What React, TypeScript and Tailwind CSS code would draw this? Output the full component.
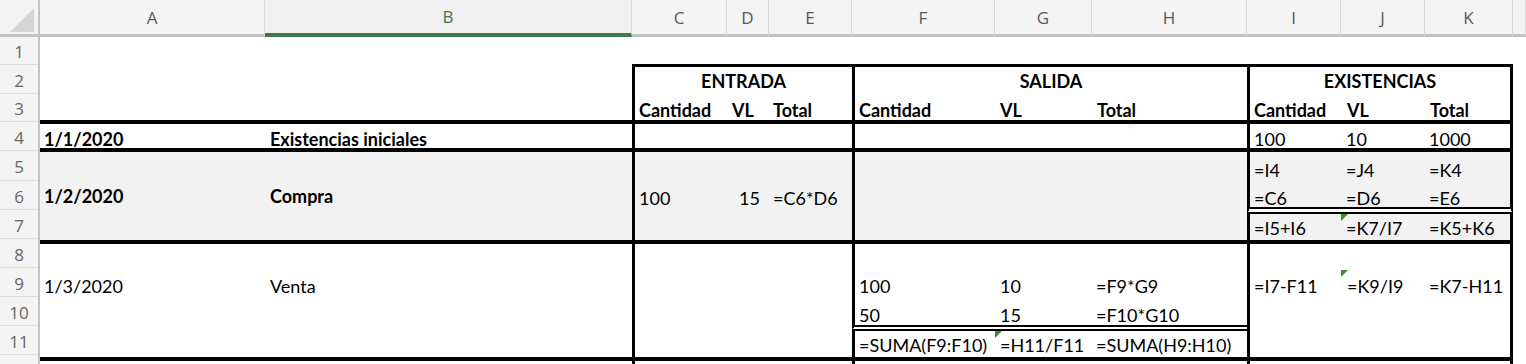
import React from "react";

type CellProps = { className?: string; children?: React.ReactNode; flag?: boolean };

function Cell({ className = "", children, flag }: CellProps) {
  return (
    <div className={"relative flex whitespace-nowrap leading-[18px] border-black " + className}>
      {flag && (
        <span className="absolute left-0 top-0 h-0 w-0 border-t-[7px] border-r-[7px] border-t-[#3f8d2b] border-r-transparent" />
      )}
      {children}
    </div>
  );
}

const headers = ["A", "B", "C", "D", "E", "F", "G", "H", "I", "J", "K", ""];
const rowNums = [
  { n: "1", h: "h-[28px]" },
  { n: "2", h: "h-[29px]" },
  { n: "3", h: "h-[28px]" },
  { n: "4", h: "h-[29px]" },
  { n: "5", h: "h-[30px]" },
  { n: "6", h: "h-[29px]" },
  { n: "7", h: "h-[29px]" },
  { n: "8", h: "h-[29px]" },
  { n: "9", h: "h-[29px]" },
  { n: "10", h: "h-[29px]" },
  { n: "11", h: "h-[29px]" },
  { n: "", h: "h-[29px]" },
];

export default function App() {
  return (
    <div className="h-[364px] w-[1526px] overflow-hidden bg-white text-[18px] text-black font-['Lato','Liberation_Sans',sans-serif]">
      {/* column headers */}
      <div className="flex h-[37px] font-['Open_Sans',sans-serif] text-[17px] text-[#595959]">
        <div className="flex h-[37px] w-[40px] shrink-0 items-end justify-end border-r-2 border-b-[3px] border-[#c3c3c3] bg-[#f4f4f4] pr-[4px] pb-[2px]">
          <svg width="24" height="24" viewBox="0 0 24 24">
            <polygon points="24,0 24,24 0,24" fill="#d6d6d6" />
          </svg>
        </div>
        <div className="grid flex-1 grid-cols-[225px_367px_95px_42px_83px_143px_97px_155px_94px_84px_88px_1fr]">
          {headers.map((h) =>
            h === "B" ? (
              <div
                key={h}
                className="flex items-center justify-center border-r border-b-4 border-r-[#d9d9d9] border-b-[#3b7a4c] bg-[#f0f0f0] pt-[1px] text-[#3b7a4c]"
              >
                {h}
              </div>
            ) : (
              <div
                key={h || "L"}
                className="flex items-center justify-center border-r border-b-[3px] border-r-[#d9d9d9] border-b-[#c3c3c3] bg-[#f4f4f4] pt-[1px]"
              >
                {h}
              </div>
            )
          )}
        </div>
      </div>

      <div className="flex">
        {/* row headers */}
        <div className="flex w-[40px] shrink-0 flex-col border-r-2 border-[#c3c3c3] bg-[#f4f4f4] font-['Open_Sans',sans-serif] text-[17px] text-[#666666]">
          {rowNums.map((r, i) => (
            <div
              key={i}
              className={"flex shrink-0 items-center justify-center border-b border-[#dedede] pt-[3px] " + r.h}
            >
              {r.n}
            </div>
          ))}
        </div>

        {/* sheet */}
        <div className="grid flex-1 grid-cols-[225px_367px_95px_42px_83px_143px_97px_155px_94px_84px_88px_1fr] grid-rows-[27px_30px_26px_28px_34px_32px_26px_30px_30px_31px_26px_40px]">
          {/* row 2 */}
          <Cell className="col-start-3 col-span-3 row-start-2 items-end justify-center border-t-[3px] border-l-[3px] pb-[4px] font-bold">
            ENTRADA
          </Cell>
          <Cell className="col-start-6 col-span-3 row-start-2 items-end justify-center border-t-[3px] border-l-[3px] pb-[4px] font-bold">
            SALIDA
          </Cell>
          <Cell className="col-start-9 col-span-3 row-start-2 items-end justify-center border-t-[3px] border-l-[3px] border-r-[3px] pb-[4px] font-bold">
            EXISTENCIAS
          </Cell>

          {/* row 3 */}
          <Cell className="col-start-3 row-start-3 items-end border-l-[3px] pl-1 pb-[1px] font-bold">Cantidad</Cell>
          <Cell className="col-start-4 row-start-3 items-end pl-[5px] pb-[1px] font-bold">VL</Cell>
          <Cell className="col-start-5 row-start-3 items-end pl-1 pb-[1px] font-bold">Total</Cell>
          <Cell className="col-start-6 row-start-3 items-end border-l-[3px] pl-1 pb-[1px] font-bold">Cantidad</Cell>
          <Cell className="col-start-7 row-start-3 items-end pl-[5px] pb-[1px] font-bold">VL</Cell>
          <Cell className="col-start-8 row-start-3 items-end pl-[5px] pb-[1px] font-bold">Total</Cell>
          <Cell className="col-start-9 row-start-3 items-end border-l-[3px] pl-1 pb-[1px] font-bold">Cantidad</Cell>
          <Cell className="col-start-10 row-start-3 items-end pl-[6px] pb-[1px] font-bold">VL</Cell>
          <Cell className="col-start-11 row-start-3 items-end border-r-[3px] pl-[5px] pb-[1px] font-bold">Total</Cell>

          {/* row 4 */}
          <Cell className="col-start-1 row-start-4 items-end border-t-4 pl-1 font-bold">1/1/2020</Cell>
          <Cell className="col-start-2 row-start-4 items-end border-t-4 pl-[5px] font-bold">Existencias iniciales</Cell>
          <Cell className="col-start-3 col-span-3 row-start-4 border-t-4 border-l-[3px]" />
          <Cell className="col-start-6 col-span-3 row-start-4 border-t-4 border-l-[3px]" />
          <Cell className="col-start-9 row-start-4 items-end border-t-4 border-l-[3px] pl-1">100</Cell>
          <Cell className="col-start-10 row-start-4 items-end border-t-4 pl-[5px]">10</Cell>
          <Cell className="col-start-11 row-start-4 items-end border-t-4 border-r-[3px] pl-1">1000</Cell>

          {/* rows 5-7 */}
          <Cell className="col-start-1 row-start-5 row-span-3 items-center border-t-4 bg-[#f2f2f2] pl-1 font-bold">
            1/2/2020
          </Cell>
          <Cell className="col-start-2 row-start-5 row-span-3 items-center border-t-4 bg-[#f2f2f2] pl-[5px] font-bold">
            Compra
          </Cell>
          <Cell className="col-start-3 row-start-5 row-span-3 items-center border-t-4 border-l-[3px] bg-[#f2f2f2] pt-[4px] pl-1">
            100
          </Cell>
          <Cell className="col-start-4 row-start-5 row-span-3 items-center border-t-4 bg-[#f2f2f2] pt-[4px] pl-[12px]">
            15
          </Cell>
          <Cell className="col-start-5 row-start-5 row-span-3 items-center border-t-4 bg-[#f2f2f2] pt-[4px] pl-1">
            =C6*D6
          </Cell>
          <Cell className="col-start-6 col-span-3 row-start-5 row-span-3 border-t-4 border-l-[3px] bg-[#f2f2f2]" />

          <Cell className="col-start-9 row-start-5 items-end border-t-4 border-l-[3px] bg-[#f2f2f2] pl-1 pb-[3px]">=I4</Cell>
          <Cell className="col-start-10 row-start-5 items-end border-t-4 bg-[#f2f2f2] pl-[5px] pb-[3px]">=J4</Cell>
          <Cell className="col-start-11 row-start-5 items-end border-t-4 border-r-[3px] bg-[#f2f2f2] pl-1 pb-[3px]">=K4</Cell>

          <Cell className="col-start-9 row-start-6 items-end border-l-[3px] border-b-[7px] [border-bottom-style:double] bg-[#f2f2f2] bg-clip-padding pl-1">
            =C6
          </Cell>
          <Cell className="col-start-10 row-start-6 items-end border-b-[7px] [border-bottom-style:double] bg-[#f2f2f2] bg-clip-padding pl-[5px]">
            =D6
          </Cell>
          <Cell className="col-start-11 row-start-6 items-end border-r-[3px] border-b-[7px] [border-bottom-style:double] bg-[#f2f2f2] bg-clip-padding pl-1">
            =E6
          </Cell>

          <Cell className="col-start-9 row-start-7 items-end border-l-[3px] bg-[#f2f2f2] pl-1 pb-[3px]">=I5+I6</Cell>
          <Cell className="col-start-10 row-start-7 items-end bg-[#f2f2f2] pl-[5px] pb-[3px]" flag>
            =K7/I7
          </Cell>
          <Cell className="col-start-11 row-start-7 items-end border-r-[3px] bg-[#f2f2f2] pl-1 pb-[3px]">=K5+K6</Cell>

          {/* rows 8-11 */}
          <Cell className="col-start-1 row-start-8 border-t-4" />
          <Cell className="col-start-2 row-start-8 border-t-4" />
          <Cell className="col-start-3 col-span-3 row-start-8 row-span-4 border-t-4 border-l-[3px]" />
          <Cell className="col-start-6 col-span-3 row-start-8 border-t-4 border-l-[3px]" />
          <Cell className="col-start-9 row-start-8 border-t-4 border-l-[3px]" />
          <Cell className="col-start-10 row-start-8 border-t-4" />
          <Cell className="col-start-11 row-start-8 border-t-4 border-r-[3px]" />

          <Cell className="col-start-1 row-start-9 items-end pl-1 pb-[5px]">1/3/2020</Cell>
          <Cell className="col-start-2 row-start-9 items-end pl-[5px] pb-[5px]">Venta</Cell>
          <Cell className="col-start-6 row-start-9 items-end border-l-[3px] pl-1 pb-[5px]">100</Cell>
          <Cell className="col-start-7 row-start-9 items-end pl-[5px] pb-[5px]">10</Cell>
          <Cell className="col-start-8 row-start-9 items-end pl-1 pb-[5px]">=F9*G9</Cell>
          <Cell className="col-start-9 row-start-9 items-end border-l-[3px] pl-1 pb-[5px]">=I7-F11</Cell>
          <Cell className="col-start-10 row-start-9 items-end pl-[6px] pb-[5px]" flag>
            =K9/I9
          </Cell>
          <Cell className="col-start-11 row-start-9 items-end border-r-[3px] pl-1 pb-[5px]">=K7-H11</Cell>

          <Cell className="col-start-6 row-start-10 items-end border-l-[3px] border-b-[6px] [border-bottom-style:double] pl-1 pb-[1px]">
            50
          </Cell>
          <Cell className="col-start-7 row-start-10 items-end border-b-[6px] [border-bottom-style:double] pl-[5px] pb-[1px]">
            15
          </Cell>
          <Cell className="col-start-8 row-start-10 items-end border-b-[6px] [border-bottom-style:double] pl-1 pb-[1px]">
            =F10*G10
          </Cell>
          <Cell className="col-start-9 row-start-10 row-span-2 border-l-[3px]" />
          <Cell className="col-start-11 row-start-10 row-span-2 border-r-[3px]" />

          <Cell className="col-start-6 row-start-11 items-end border-l-[3px] pl-1 pb-[3px]">=SUMA(F9:F10)</Cell>
          <Cell className="col-start-7 row-start-11 items-end pl-[5px] pb-[3px]" flag>
            =H11/F11
          </Cell>
          <Cell className="col-start-8 row-start-11 items-end pl-1 pb-[3px]">=SUMA(H9:H10)</Cell>

          {/* row 12 */}
          <Cell className="col-start-1 row-start-12 border-t-4" />
          <Cell className="col-start-2 row-start-12 border-t-4" />
          <Cell className="col-start-3 col-span-3 row-start-12 border-t-4 border-l-[3px]" />
          <Cell className="col-start-6 col-span-3 row-start-12 border-t-4 border-l-[3px]" />
          <Cell className="col-start-9 col-span-3 row-start-12 border-t-4 border-l-[3px] border-r-[3px]" />
        </div>
      </div>
    </div>
  );
}
